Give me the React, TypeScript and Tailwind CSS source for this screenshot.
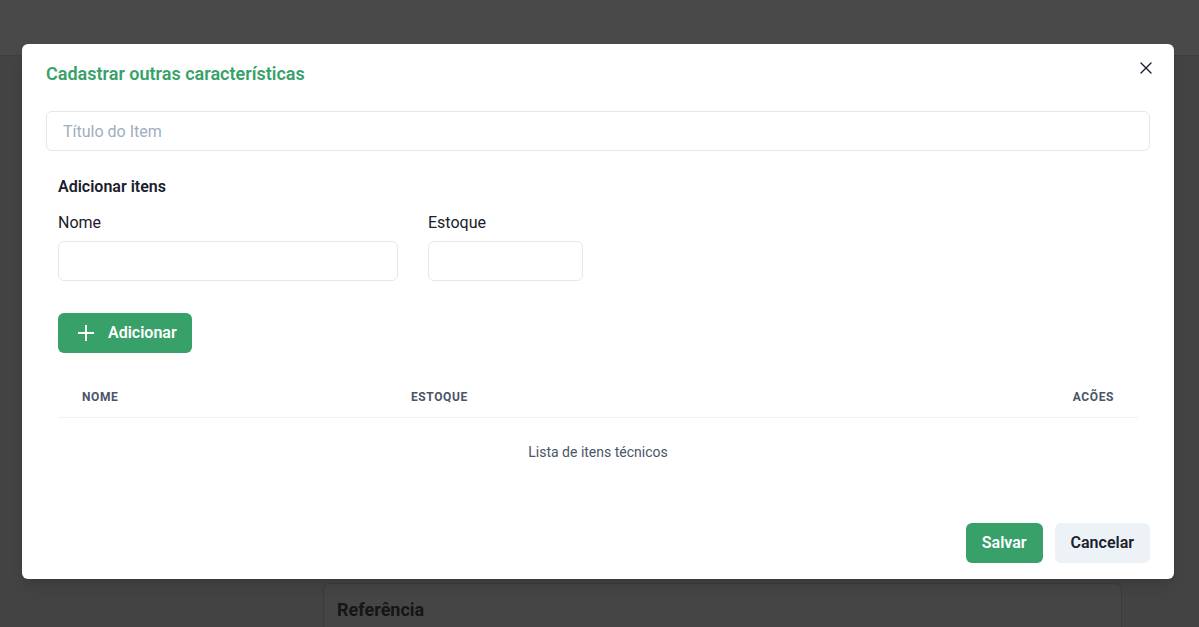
import React from 'react';

const font = { fontFamily: 'Roboto, "Liberation Sans", sans-serif' };

const CloseIcon = () => (
  <svg width="12" height="12" viewBox="0 0 12 12" fill="none" stroke="#1a202c" strokeWidth="1.4" strokeLinecap="round">
    <path d="M1 1l10 10M11 1L1 11" />
  </svg>
);

const PlusIcon = () => (
  <svg width="20" height="20" viewBox="0 0 20 20" fill="none" stroke="white" strokeWidth="2">
    <path d="M10 2v16M2 10h16" />
  </svg>
);

export default function App() {
  return (
    <div className="relative h-[627px] w-[1199px] overflow-hidden bg-[#434343]" style={font}>
      {/* page underneath the overlay */}
      <div className="h-14 border-b border-[#3e3e3e] bg-[#494949]" />
      <div className="pl-[323px] pr-[77px] pt-[527px]">
        <div className="h-[60px] rounded-t-md border border-[#3b3b3b] bg-[#454545] px-[13px] pt-[12px]">
          <h2 className="text-lg font-bold text-[#151515]">Referência</h2>
        </div>
      </div>

      {/* modal */}
      <div className="absolute left-[22px] top-[44px] w-[1152px] rounded-md bg-white shadow-lg">
        <div className="relative px-6 py-4">
          <h1 className="text-lg leading-7 font-semibold text-[#38a169]">Cadastrar outras características</h1>
          <button className="absolute right-3 top-2 flex h-8 w-8 items-center justify-center rounded-md">
            <CloseIcon />
          </button>
        </div>

        <div className="px-6 pt-[7px]">
          <input
            className="h-10 w-full rounded-md border border-[#e2e8f0] px-4 text-base text-[#1a202c] outline-none placeholder:text-[#a0aec0]"
            placeholder="Título do Item"
          />

          <div className="px-3">
            <h3 className="mt-6 text-base leading-6 font-semibold text-[#1a202c]">Adicionar itens</h3>

            <div className="mt-3 flex gap-[30px]">
              <div className="w-[340px]">
                <label className="mb-[6px] block text-base leading-6 text-[#1a202c]">Nome</label>
                <input className="h-10 w-full rounded-md border border-[#e2e8f0] px-4 outline-none" />
              </div>
              <div className="w-[155px]">
                <label className="mb-[6px] block text-base leading-6 text-[#1a202c]">Estoque</label>
                <input className="h-10 w-full rounded-md border border-[#e2e8f0] px-4 outline-none" />
              </div>
            </div>

            <button className="mt-8 flex h-10 items-center rounded-md bg-[#38a169] pl-[18px] pr-[15px] text-base font-semibold text-white">
              <span className="mr-3"><PlusIcon /></span>
              Adicionar
            </button>

            <div className="mt-6 w-[1080px]">
              <div className="grid grid-cols-[329px_1fr_auto] border-b border-[#edf2f7] text-xs leading-4 font-bold tracking-wider text-[#4a5568] uppercase">
                <div className="px-6 py-3">Nome</div>
                <div className="px-6 py-3">Estoque</div>
                <div className="px-6 py-3 text-right">Acões</div>
              </div>
              <div className="py-6 text-center text-sm leading-5 text-[#4a5568]">Lista de itens técnicos</div>
            </div>
          </div>
        </div>

        <div className="flex justify-end gap-3 px-6 pt-[37px] pb-4">
          <button className="h-10 rounded-md bg-[#38a169] px-4 text-base font-semibold text-white">Salvar</button>
          <button className="h-10 rounded-md bg-[#edf2f7] px-4 text-base font-semibold text-[#1a202c]">Cancelar</button>
        </div>
      </div>
    </div>
  );
}
